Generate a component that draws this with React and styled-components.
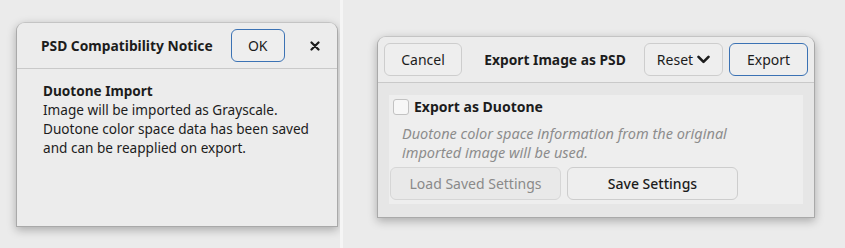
import React from "react";
import styled, { createGlobalStyle, css } from "styled-components";

const Global = createGlobalStyle`
  html, body { margin: 0; padding: 0; background: #f4f4f4; }
  body { font-family: "Noto Sans", "Open Sans", sans-serif; color: #1c1c1c; }
  * { box-sizing: border-box; }
`;

const Page = styled.div`
  display: flex;
  width: 845px;
  height: 248px;
  overflow: hidden;
`;

const Pane = styled.div`
  width: ${(p) => p.$w}px;
  height: 248px;
  background: #ebebeb;
  padding: ${(p) => p.$pad};
  flex-shrink: 0;
`;

const Divider = styled.div`
  width: 3px;
  background: #f5f5f5;
  flex-shrink: 0;
`;

const Dialog = styled.div`
  width: ${(p) => p.$w}px;
  height: ${(p) => p.$h}px;
  background: #ececec;
  border: 1px solid #a9a9a9;
  border-top-color: #c4c4c4;
  border-radius: 9px 9px 0 0;
  box-shadow: 0 3px 10px rgba(0, 0, 0, 0.28);
  display: flex;
  flex-direction: column;
  overflow: hidden;
`;

const Header = styled.div`
  height: 46px;
  flex-shrink: 0;
  display: flex;
  align-items: center;
  padding: ${(p) => p.$pad};
  gap: ${(p) => p.$gap || 0}px;
  border-bottom: 1px solid #c9c9c9;
  background: #ececec;
`;

const Title = styled.div`
  font-weight: 700;
  font-size: 13.8px;
  white-space: nowrap;
  ${(p) =>
    p.$center &&
    css`
      flex: 1;
      text-align: center;
      padding-left: 4px;
    `}
`;

const Button = styled.button`
  font-family: inherit;
  font-size: 14px;
  height: 33px;
  width: ${(p) => p.$w}px;
  border-radius: 6px;
  background: ${(p) => (p.$disabled ? "#e9e9e9" : "#eeeeee")};
  border: 1px solid ${(p) => (p.$primary ? "#3b72b4" : p.$disabled ? "#d6d6d6" : "#cdcdcd")};
  color: ${(p) => (p.$disabled ? "#8a8a8a" : "#1c1c1c")};
  font-weight: ${(p) => (p.$bold ? 500 : 400)};
  display: flex;
  align-items: center;
  justify-content: center;
  gap: 4px;
  padding: 0;
  flex-shrink: 0;
  margin-left: ${(p) => p.$ml || 0}px;
`;

const CloseBtn = styled.div`
  width: 30px;
  height: 30px;
  display: flex;
  align-items: center;
  justify-content: center;
  margin-left: 15px;
`;

const NoticeBody = styled.div`
  padding: 12px 8px 12px 26px;
  font-size: 13.6px;
  line-height: 19px;
  white-space: nowrap;
`;

const Strong = styled.div`
  font-weight: 700;
`;

const ExportBody = styled.div`
  flex: 1;
  background: #e6e6e6;
  padding: 12px 11px 12px 11px;
`;

const Panel = styled.div`
  background: #eeeeee;
  height: 109px;
  padding: 2px 0 0 0;
  display: flex;
  flex-direction: column;
`;

const CheckRow = styled.label`
  display: flex;
  align-items: center;
  gap: 5px;
  padding-left: 4px;
  height: 19px;
  font-weight: 700;
  font-size: 14px;
`;

const Box = styled.span`
  width: 16px;
  height: 16px;
  border: 1px solid #c2c2c2;
  border-radius: 3px;
  background: #f7f7f7;
  display: inline-block;
`;

const Hint = styled.div`
  font-style: italic;
  color: #8c8c8c;
  font-size: 14.5px;
  line-height: 19px;
  padding-left: 13px;
  margin-top: 8px;
  white-space: nowrap;
`;

const ButtonRow = styled.div`
  display: flex;
  gap: 6px;
  margin-top: 5px;
  padding-left: 1px;
`;

const Chevron = () => (
  <svg width="13" height="9" viewBox="0 0 13 9">
    <polyline points="1.5,1.8 6.5,6.8 11.5,1.8" fill="none" stroke="#1c1c1c" strokeWidth="2.6" strokeLinecap="round" strokeLinejoin="round" />
  </svg>
);

const XIcon = () => (
  <svg width="10" height="10" viewBox="0 0 10 10">
    <path d="M1.5 1.5 L8.5 8.5 M8.5 1.5 L1.5 8.5" stroke="#1c1c1c" strokeWidth="2.2" strokeLinecap="round" />
  </svg>
);

export default function App() {
  return (
    <Page>
      <Global />
      <Pane $w={340} $pad="22px 0 0 16px">
        <Dialog $w={322} $h={205}>
          <Header $pad="0 0 0 24px">
            <Title>PSD Compatibility Notice</Title>
            <Button $primary $w={54} $ml={18}>OK</Button>
            <CloseBtn><XIcon /></CloseBtn>
          </Header>
          <NoticeBody>
            <Strong>Duotone Import</Strong>
            <div>Image will be imported as Grayscale.</div>
            <div>Duotone color space data has been saved</div>
            <div>and can be reapplied on export.</div>
          </NoticeBody>
        </Dialog>
      </Pane>
      <Divider />
      <Pane $w={502} $pad="36px 0 0 34px">
        <Dialog $w={438} $h={182}>
          <Header $pad="0 6px 0 6px" $gap={0}>
            <Button $w={78}>Cancel</Button>
            <Title $center>Export Image as PSD</Title>
            <Button $w={79}>Reset <Chevron /></Button>
            <Button $primary $w={79} $ml={6}>Export</Button>
          </Header>
          <ExportBody>
            <Panel>
              <CheckRow><Box /> Export as Duotone</CheckRow>
              <Hint>
                Duotone color space information from the original
                <br />
                imported image will be used.
              </Hint>
              <ButtonRow>
                <Button $disabled $w={171}>Load Saved Settings</Button>
                <Button $bold $w={171}>Save Settings</Button>
              </ButtonRow>
            </Panel>
          </ExportBody>
        </Dialog>
      </Pane>
    </Page>
  );
}
